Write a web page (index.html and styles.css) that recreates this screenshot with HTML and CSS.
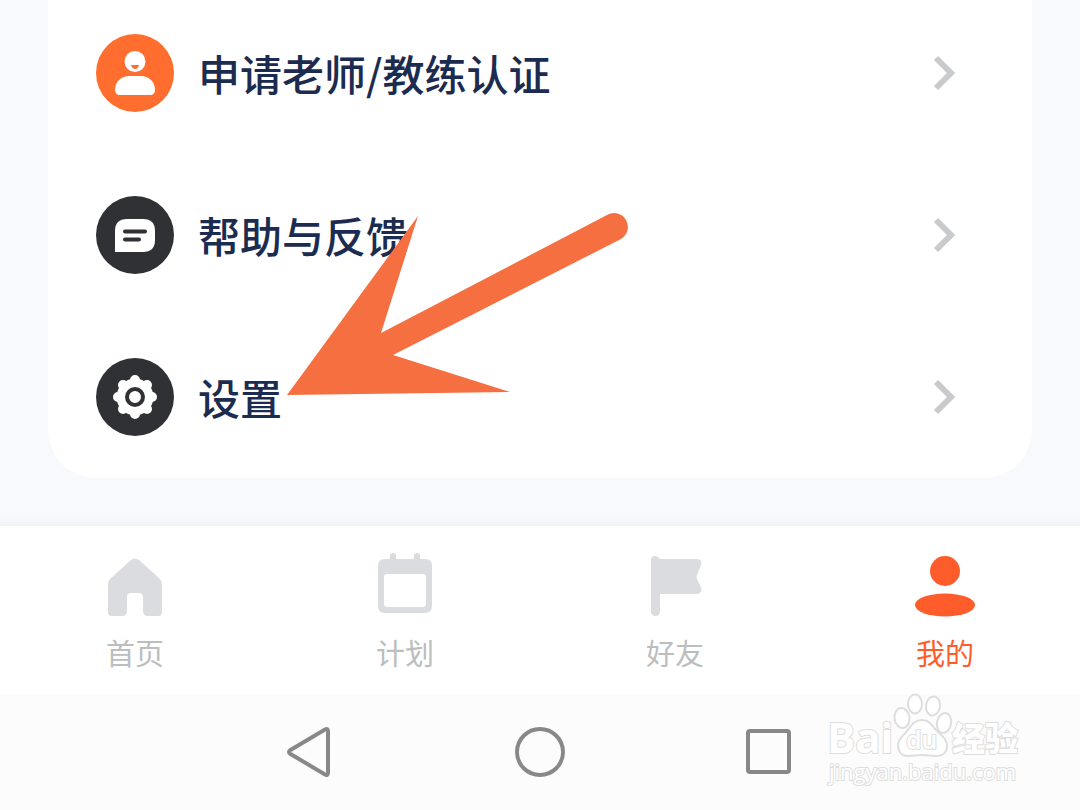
FILE: index.html
```html
<!DOCTYPE html>
<html lang="zh-CN">
  <head>
    <meta charset="UTF-8" />
    <meta name="viewport" content="width=device-width, initial-scale=1.0" />
    <title>我的</title>
    <link rel="stylesheet" href="styles.css">
  </head>
  <body>
    <main class="content">
      <div class="card">
        <a class="row" href="#">
          <svg class="row-icon" viewBox="0 0 78 78" aria-hidden="true">
            <circle cx="39" cy="39" r="39" fill="#ff6e2e" />
            <circle cx="39" cy="27.500" r="10.500" fill="#fff" />
            <path d="M35 31h8q-1 4-4 4t-4-4z" fill="#ff6e2e" />
            <path d="M19 56c0-9 7-14 14-14h12c7 0 14 5 14 14 0 3-2 5-5 5H24c-3 0-5-2-5-5z" fill="#fff" />
          </svg>
          <span class="label">申请老师/教练认证</span>
          <svg class="chevron" viewBox="0 0 24 38" aria-hidden="true"><path d="M3 4l15 15L3 34" /></svg>
        </a>
        <a class="row" href="#">
          <svg class="row-icon" viewBox="0 0 78 78" aria-hidden="true">
            <circle cx="39" cy="39" r="39" fill="#303135" />
            <path d="M19 56V35q0-12 12-12h16q12 0 12 12v9q0 12-12 12z" fill="#fff" />
            <path d="M29 35.500h20M29 43.500h14" stroke="#303135" stroke-width="4" stroke-linecap="round" />
          </svg>
          <span class="label">帮助与反馈</span>
          <svg class="chevron" viewBox="0 0 24 38" aria-hidden="true"><path d="M3 4l15 15L3 34" /></svg>
        </a>
        <a class="row" href="#">
          <svg class="row-icon" viewBox="0 0 78 78" aria-hidden="true">
            <circle cx="39" cy="39" r="39" fill="#303135" />
            <g fill="#fff" stroke="#fff">
              <circle cx="39" cy="39" r="18.500" stroke="none" />
              <path d="M39 22v34M22 39h34M27 27l24 24M51 27L27 51" stroke-width="10" stroke-linecap="round" />
            </g>
            <circle cx="39" cy="39" r="8" fill="#fff" stroke="#303135" stroke-width="4" />
          </svg>
          <span class="label">设置</span>
          <svg class="chevron" viewBox="0 0 24 38" aria-hidden="true"><path d="M3 4l15 15L3 34" /></svg>
        </a>

        <!-- Pointer to the settings row -->
        <svg class="arrow" viewBox="0 0 350 200" aria-hidden="true">
          <path d="M0 195L131 16 94 133 320 15A13.500 13.500 0 0 1 334 39L106 155 223 192z" />
        </svg>
      </div>
    </main>

    <nav class="tabs">
      <a class="tab" href="#">
        <svg viewBox="0 0 64 64" aria-hidden="true">
          <path d="M28 6q4-3 8 0l21 19q2 2 2 5v28q0 4-4 4H45q-5 0-5-5V43q0-4-4-4h-8q-4 0-4 4v14q0 5-5 5H9q-4 0-4-4V30q0-3 2-5z" />
        </svg>
        <span>首页</span>
      </a>
      <a class="tab" href="#">
        <svg viewBox="0 0 64 64" aria-hidden="true">
          <path fill-rule="evenodd" d="M12 5h40q7 0 7 7v40q0 7-7 7H12q-7 0-7-7V12q0-7 7-7zm2 15q-3 0-3 3v27q0 3 3 3h36q3 0 3-3V23q0-3-3-3z" />
          <path d="M17 8V2a3 3 0 0 1 6 0v6zM41 8V2a3 3 0 0 1 6 0v6z" />
        </svg>
        <span>计划</span>
      </a>
      <a class="tab" href="#">
        <svg viewBox="0 0 64 64" aria-hidden="true">
          <path d="M8 6q0-4 4-4 3 0 5 3h36q7 0 5 6l-4 10q-1 2 0 4l4 8q2 7-5 7H17v17q0 5-4.500 5T8 57z" />
        </svg>
        <span>好友</span>
      </a>
      <a class="tab active" href="#" aria-current="page">
        <svg viewBox="0 0 64 64" aria-hidden="true">
          <circle cx="32" cy="17" r="15" />
          <ellipse cx="32" cy="51" rx="30" ry="11.500" />
        </svg>
        <span>我的</span>
      </a>
    </nav>

    <div class="system-bar">
      <button aria-label="返回">
        <svg viewBox="0 0 52 52" aria-hidden="true"><path d="M6.500 24L41 3.500q3-1.500 3 2v41q0 3.500-3 2L6.500 28q-3-2 0-4z" /></svg>
      </button>
      <button aria-label="主屏幕">
        <svg viewBox="0 0 52 52" aria-hidden="true"><circle cx="26" cy="26" r="23" /></svg>
      </button>
      <button aria-label="最近任务">
        <svg viewBox="0 0 52 52" aria-hidden="true"><rect x="4" y="5" width="41" height="41" rx="2" /></svg>
      </button>

      <svg class="watermark" viewBox="0 0 204 104" role="img" aria-label="Baidu 经验">
        <text class="brand" x="5" y="63">Bai</text>
        <ellipse cx="80" cy="28" rx="7.500" ry="10" transform="rotate(-8 80 28)" />
        <ellipse cx="93" cy="14" rx="7" ry="9.500" />
        <ellipse cx="111" cy="16" rx="7" ry="9.500" transform="rotate(8 111 16)" />
        <ellipse cx="122" cy="33" rx="7" ry="10" transform="rotate(12 122 33)" />
        <path d="M100 30c8 0 10 6 15 11s10 8 10 15c0 7-5 10-11 10-5 0-8-1-14-1s-9 1-14 1c-6 0-10-4-10-11 0-6 5-9 9-14s7-11 15-11z" />
        <text class="du" x="84" y="59">du</text>
        <text class="product" x="130" y="61">经验</text>
        <text class="site" x="7" y="90">jingyan.baidu.com</text>
      </svg>
    </div>
  </body>
</html>
```
FILE: styles.css
```css
* {
  box-sizing: border-box;
}
body {
  margin: 0;
  min-height: 100vh;
  display: flex;
  flex-direction: column;
  font-family: "Noto Sans CJK SC", sans-serif;
  background: #f8f9fd;
}
a {
  color: inherit;
  text-decoration: none;
}

.content {
  padding: 0 48px 48px;
  background: linear-gradient(to top, #f1f3f7, #f8f9fd 8px);
}
.card {
  position: relative;
  padding: 34px 75px 42px 48px;
  display: flex;
  flex-direction: column;
  gap: 84px;
  background: #fff;
  border-radius: 0 0 48px 48px;
}
.row {
  display: flex;
  align-items: center;
  gap: 24px;
}
.row-icon {
  width: 78px;
  height: 78px;
}
.label {
  flex: 1;
  font-size: 42px;
  font-weight: 500;
  line-height: 60px;
  color: #1b2c50;
}
.chevron {
  width: 24px;
  height: 38px;
  fill: none;
  stroke: #c9cacc;
  stroke-width: 6;
}
.arrow {
  position: absolute;
  left: 239px;
  top: 200px;
  width: 350px;
  height: 200px;
  fill: #f66f40;
}

.tabs {
  display: grid;
  grid-template-columns: repeat(4, 1fr);
  padding: 28px 0 20px;
  background: #fff;
}
.tab {
  display: flex;
  flex-direction: column;
  align-items: center;
  gap: 12px;
  font-size: 29px;
  line-height: 44px;
  color: #bcbdbf;
}
.tab svg {
  width: 64px;
  height: 64px;
  overflow: visible;
  fill: #dbdce0;
}
.tab.active {
  color: #ff5c2b;
}
.tab.active svg {
  fill: #ff5c2b;
}

.system-bar {
  position: relative;
  flex: 1;
  min-height: 116px;
  display: flex;
  align-items: center;
  justify-content: center;
  gap: 178px;
  background: #fcfcfc;
}
.system-bar button {
  width: 52px;
  height: 52px;
  padding: 0;
  border: 0;
  background: none;
}
.system-bar button svg {
  display: block;
  fill: none;
  stroke: #888;
  stroke-width: 4;
}
.watermark {
  position: absolute;
  right: 54px;
  top: -4px;
  width: 204px;
  height: 104px;
  fill: #fff;
  stroke: #dedede;
  stroke-width: 2;
}
.watermark text {
  font-family: "Open Sans", "Noto Sans CJK SC", sans-serif;
  paint-order: stroke;
}
.watermark .brand {
  font-size: 42px;
  font-weight: 700;
}
.watermark .du {
  font-size: 25px;
  font-weight: 600;
}
.watermark .product {
  font-size: 33px;
  font-weight: 900;
}
.watermark .site {
  font-size: 22px;
}
```
